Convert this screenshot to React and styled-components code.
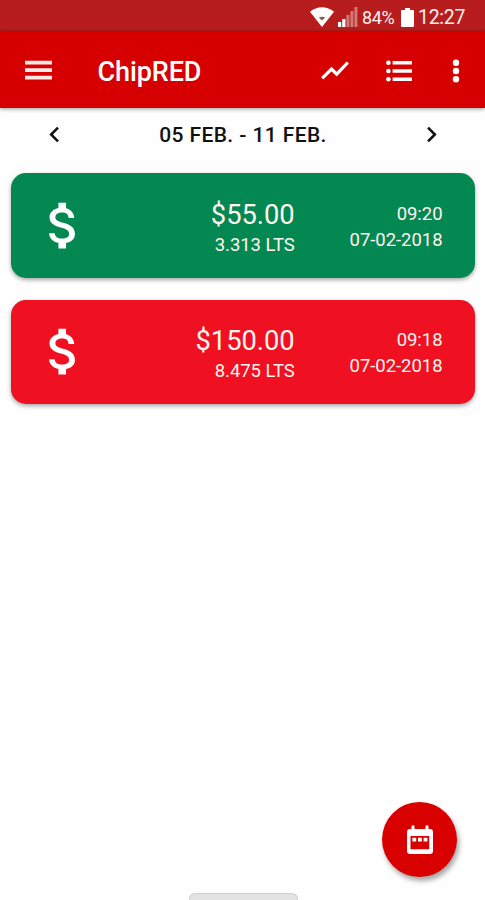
import React from 'react'
import styled, { createGlobalStyle } from 'styled-components'
import { MdAttachMoney, MdChevronLeft, MdChevronRight } from 'react-icons/md'

const GlobalStyle = createGlobalStyle`
	* {
		box-sizing: border-box;
	}
	body {
		margin: 0;
		background: #fefefe;
		font-family: Roboto, 'Liberation Sans', sans-serif;
	}
	svg {
		display: block;
		flex-shrink: 0;
	}
`
const Screen = styled.div`
	width: 485px;
	height: 900px;
	display: flex;
	flex-direction: column;
	overflow: hidden;
`
const StatusBar = styled.div`
	height: 32px;
	padding: 2px 20px 0 0;
	display: flex;
	justify-content: flex-end;
	align-items: center;
	gap: 4px;
	background: linear-gradient(#b71d1d 88%, #a81a1a);
	color: #fff0ee;
`
const StatusText = styled.span`
	font-size: ${({ $size }) => $size}px;
	font-weight: 450;
	line-height: 28px;
	padding-top: 1px;
	width: ${({ $width }) => $width}px;
	letter-spacing: ${({ $spacing }) => $spacing || 0}px;
	white-space: nowrap;
`
const AppBar = styled.header`
	height: 76px;
	padding: 0 25px 0 25px;
	display: flex;
	align-items: center;
	background: #d60000;
	color: #fff;
	box-shadow: 0 1px 4px rgba(0, 0, 0, 0.4);
`
const Title = styled.h1`
	margin: 0 0 0 45.5px;
	flex: 1;
	font-size: 27px;
	font-weight: 550;
	line-height: 36px;
	padding-top: 3px;
	letter-spacing: -0.1px;
`
const Actions = styled.div`
	display: flex;
	align-items: center;
	padding-top: 1px;
`
const IconButton = styled.button`
	padding: 0;
	border: 0;
	background: none;
	color: inherit;
	margin-left: ${({ $gap }) => $gap || 0}px;
`
const WeekPicker = styled.nav`
	height: 53px;
	padding: 0 38px 0 39px;
	display: flex;
	align-items: center;
	justify-content: space-between;
	color: #111;
`
const Week = styled.span`
	font-size: 21px;
	font-weight: 550;
	letter-spacing: 0.4px;
`
const List = styled.main`
	padding: 12px 10px 0 11px;
	flex: 1;
	display: flex;
	flex-direction: column;
	gap: 22px;
`
const Card = styled.article`
	height: 104.5px;
	padding: 0 32.5px 0 21.5px;
	display: flex;
	align-items: center;
	border-radius: 15px;
	background: ${({ $color }) => $color};
	color: #fff4ee;
	box-shadow: 0 2px 4px rgba(0, 0, 0, 0.35);
	svg {
		color: #fff;
	}
`
const Column = styled.div`
	width: ${({ $width }) => $width}px;
	padding-top: ${({ $top }) => $top}px;
	text-align: right;
	white-space: nowrap;
`
const Amount = styled.div`
	font-size: 27.3px;
	line-height: 34px;
`
const Detail = styled.div`
	font-size: 18.5px;
	line-height: 26px;
	letter-spacing: -0.05px;
`
const Footer = styled.footer`
	height: 98px;
	display: grid;
	grid-template-columns: 189px 109px 1fr;
`
const Handle = styled.div`
	grid-column: 2;
	align-self: end;
	height: 7px;
	background: #e3e3e3;
	border: 1px solid #cfcfcf;
	border-bottom: 0;
	border-radius: 6px 6px 0 0;
`
const Fab = styled.button`
	grid-column: 3;
	justify-self: end;
	margin-right: 28px;
	width: 75px;
	height: 75px;
	padding: 0;
	display: flex;
	align-items: center;
	justify-content: center;
	border: 0;
	border-radius: 50%;
	background: #d90000;
	box-shadow: 2px 4px 5px rgba(0, 0, 0, 0.35);
`

const entries = [
	{
		color: '#048852',
		amount: '$55.00',
		liters: '3.313 LTS',
		time: '09:20',
		date: '07-02-2018',
	},
	{
		color: '#ef1022',
		amount: '$150.00',
		liters: '8.475 LTS',
		time: '09:18',
		date: '07-02-2018',
	},
]

function WifiIcon() {
	return (
		<svg width='24' height='20' viewBox='0 0 24 20' fill='#fff'>
			<path d='M0 4.8C7-1.2 17-1.2 24 4.8L12 20Z' />
			<path d='M8.8 10.5Q12 9 15.2 10.5L12 13.5Z' fill='#8f5a50' />
		</svg>
	)
}

function SignalIcon() {
	return (
		<svg width='20' height='20' viewBox='0 0 20 20' fill='#fff'>
			<path d='M0 15h3.2v5H0zM4.2 12h3.2v8H4.2z' />
			<path d='M8.4 8h3v12h-3zM12.4 4h3v16h-3zM16.4 0h3v20h-3z' opacity='0.4' />
		</svg>
	)
}

function BatteryIcon() {
	return (
		<svg width='13' height='19' viewBox='0 0 13 19' fill='#fff'>
			<path d='M4 0h5v2h3q1 0 1 1v15q0 1-1 1H1q-1 0-1-1V3q0-1 1-1h3z' />
		</svg>
	)
}

function MenuIcon() {
	return (
		<svg width='27' height='20' viewBox='0 0 27 20' fill='#ffe9e6'>
			<path d='M0 .8h27v3.7H0zM0 8.3h27V12H0zM0 15.8h27v3.7H0z' />
		</svg>
	)
}

function ChartIcon() {
	return (
		<svg width='28' height='20' viewBox='0 0 28 20' fill='none'>
			<path
				d='M1.2 17.3L10.5 8l5.2 5.2L26.8 1.5'
				stroke='#fff'
				strokeWidth='3.2'
			/>
		</svg>
	)
}

function ListIcon() {
	return (
		<svg width='26' height='22' viewBox='0 0 26 22' fill='#fff'>
			<circle cx='2.4' cy='2.8' r='2.3' />
			<circle cx='2.4' cy='11' r='2.3' />
			<circle cx='2.4' cy='19.2' r='2.3' />
			<path d='M6.6 1H26v3.6H6.6zM6.6 9.2H26v3.6H6.6zM6.6 17.4H26V21H6.6z' />
		</svg>
	)
}

function MoreIcon() {
	return (
		<svg width='8' height='24' viewBox='0 0 8 24' fill='#fff'>
			<circle cx='4' cy='3.7' r='3.2' />
			<circle cx='4' cy='12' r='3.2' />
			<circle cx='4' cy='20.3' r='3.2' />
		</svg>
	)
}

function CalendarIcon() {
	return (
		<svg width='26' height='29' viewBox='0 0 26 29' fill='#fff'>
			<path
				fillRule='evenodd'
				d='M4.5 1q1.5-1.5 3 0v3h11V1q1.5-1.5 3 0v3H23q3 0 3 3v19q0 3-3 3H3q-3 0-3-3V7q0-3 3-3h1.5zM3.5 11v13.3h18.7V11z'
			/>
			<path d='M5.4 12.7h3.8v3.8H5.4zM11 12.7h3.8v3.8H11zM16.6 12.7h3.8v3.8h-3.8z' />
		</svg>
	)
}

function Entry({ entry }) {
	return (
		<Card $color={entry.color}>
			<MdAttachMoney size={61} />
			<Column $width={201.5} $top={5}>
				<Amount>{entry.amount}</Amount>
				<Detail>{entry.liters}</Detail>
			</Column>
			<Column $width={148} $top={3}>
				<Detail>{entry.time}</Detail>
				<Detail>{entry.date}</Detail>
			</Column>
		</Card>
	)
}

export default function App() {
	return (
		<>
			<GlobalStyle />
			<Screen>
				<StatusBar>
					<WifiIcon />
					<SignalIcon />
					<StatusText $size={18} $width={35} $spacing={-0.4}>
						84%
					</StatusText>
					<BatteryIcon />
					<StatusText $size={19.5} $width={47} $spacing={-0.3}>
						12:27
					</StatusText>
				</StatusBar>
				<AppBar>
					<IconButton aria-label='Menu'>
						<MenuIcon />
					</IconButton>
					<Title>ChipRED</Title>
					<Actions>
						<IconButton aria-label='Chart'>
							<ChartIcon />
						</IconButton>
						<IconButton aria-label='List' $gap={37}>
							<ListIcon />
						</IconButton>
						<IconButton aria-label='More' $gap={40}>
							<MoreIcon />
						</IconButton>
					</Actions>
				</AppBar>
				<WeekPicker>
					<IconButton aria-label='Previous week'>
						<MdChevronLeft size={31} />
					</IconButton>
					<Week>05 FEB. - 11 FEB.</Week>
					<IconButton aria-label='Next week'>
						<MdChevronRight size={31} />
					</IconButton>
				</WeekPicker>
				<List>
					{entries.map(entry => (
						<Entry key={entry.time} entry={entry} />
					))}
				</List>
				<Footer>
					<Handle />
					<Fab aria-label='Pick dates'>
						<CalendarIcon />
					</Fab>
				</Footer>
			</Screen>
		</>
	)
}
